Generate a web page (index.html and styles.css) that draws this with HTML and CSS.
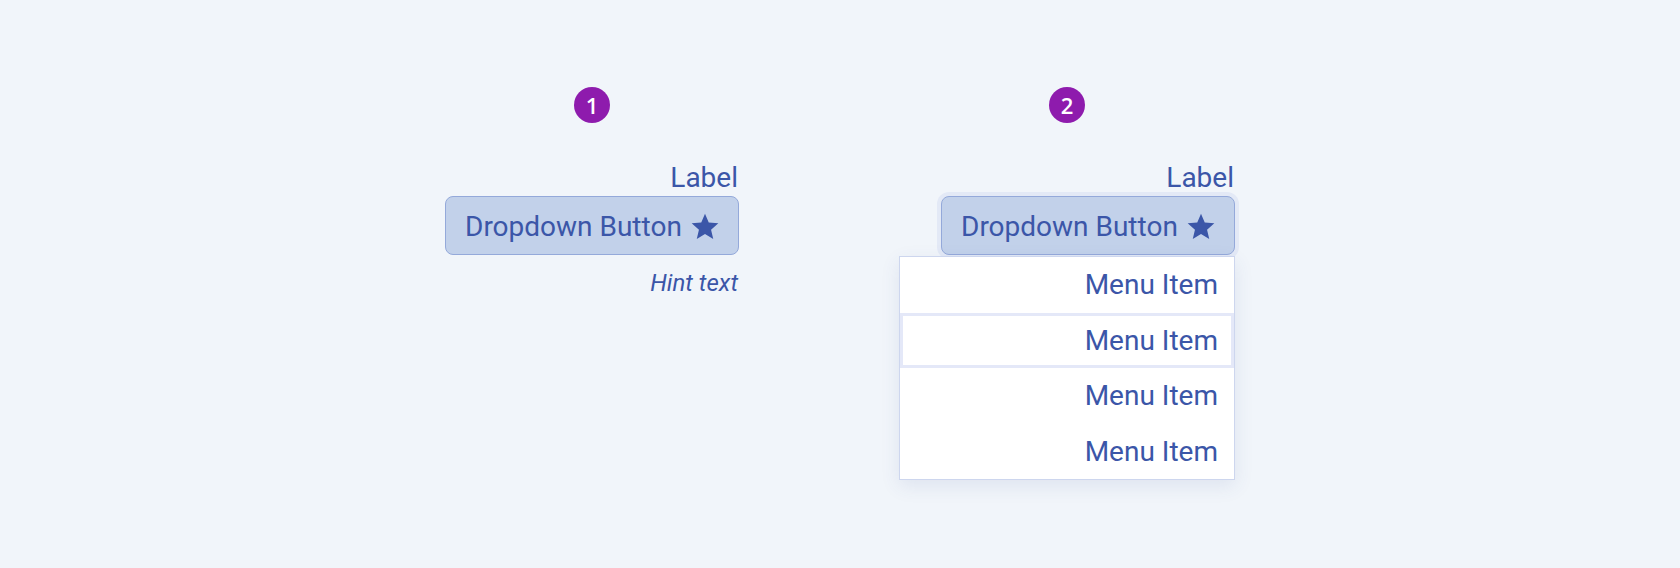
FILE: index.html
```html
<!DOCTYPE html>
<html lang="en">
<head>
  <meta charset="UTF-8" />
  <title>Dropdown Button</title>
  <link rel="stylesheet" href="styles.css">
</head>
<body>

  <div class="demo">
    <span class="badge">1</span>
    <div class="field">
      <label class="label">Label</label>
      <button class="dd-btn">
        <span>Dropdown Button</span>
        <svg class="star" viewBox="0 0 24 24"><path d="M12 17.27L18.18 21l-1.64-7.03L22 9.24l-7.19-.61L12 2 9.19 8.63 2 9.24l5.46 4.73L5.82 21z"/></svg>
      </button>
      <div class="hint">Hint text</div>
    </div>
  </div>

  <div class="demo demo-open">
    <span class="badge">2</span>
    <div class="field">
      <label class="label">Label</label>
      <button class="dd-btn focused">
        <span>Dropdown Button</span>
        <svg class="star" viewBox="0 0 24 24"><path d="M12 17.27L18.18 21l-1.64-7.03L22 9.24l-7.19-.61L12 2 9.19 8.63 2 9.24l5.46 4.73L5.82 21z"/></svg>
      </button>
      <ul class="menu">
        <li class="menu-item">Menu Item</li>
        <li class="menu-item active">Menu Item</li>
        <li class="menu-item">Menu Item</li>
        <li class="menu-item">Menu Item</li>
      </ul>
    </div>
  </div>

</body>
</html>
```

FILE: styles.css
```css
body {
  margin: 0;
  height: 568px;
  background: #f1f5fa;
  font-family: Roboto, "Liberation Sans", sans-serif;
  color: #3b56a8;
  display: flex;
  align-items: flex-start;
  justify-content: center;
  gap: 160px;
  padding-top: 87px;
  box-sizing: border-box;
}

.demo {
  display: flex;
  flex-direction: column;
  align-items: center;
}

.badge {
  width: 36px;
  height: 36px;
  border-radius: 50%;
  background: #8e1bad;
  color: #fff;
  font-family: "Open Sans", "Noto Sans", sans-serif;
  font-weight: 600;
  font-size: 22px;
  display: flex;
  align-items: center;
  justify-content: center;
  margin-bottom: 39px;
}

.field {
  display: flex;
  flex-direction: column;
  align-items: flex-end;
  align-self: stretch;
}

.label {
  font-size: 28px;
  line-height: 32px;
  margin-right: 1px;
  margin-bottom: 2px;
}

.dd-btn {
  width: 294px;
  height: 59px;
  box-sizing: border-box;
  display: flex;
  align-items: center;
  justify-content: space-between;
  padding: 2px 17px 0 19px;
  background: #c2d1ea;
  border: 1px solid #94a9da;
  border-radius: 8px;
  color: #3b56a8;
  font-family: Roboto, "Liberation Sans", sans-serif;
  font-size: 28px;
}

.dd-btn.focused {
  box-shadow: 0 0 0 4px #e3e9f6;
}

.star {
  width: 32px;
  height: 32px;
  fill: #3b56a8;
}

.hint {
  font-size: 24px;
  font-style: italic;
  line-height: 28px;
  margin-top: 14px;
  margin-right: 1px;
}

.menu {
  list-style: none;
  margin: 1px 0 0;
  padding: 0;
  width: 336px;
  box-sizing: border-box;
  background: #fff;
  border: 1px solid #cdd6ee;
  box-shadow: 0 6px 18px rgba(60, 80, 150, 0.1);
}

.menu-item {
  height: 55.5px;
  display: flex;
  align-items: center;
  justify-content: flex-end;
  padding-right: 16px;
  font-size: 28px;
}

.menu-item.active {
  box-shadow: inset 0 0 0 3px #e4e8f8;
}
```
